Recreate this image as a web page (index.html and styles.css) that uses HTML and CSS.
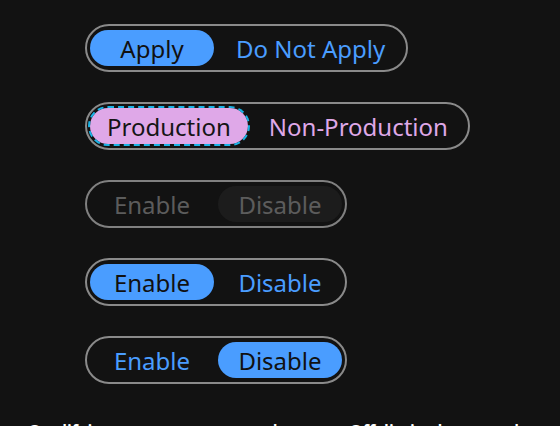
FILE: index.html
```html
<!DOCTYPE html>
<html lang="en">
<head>
<meta charset="utf-8">
<link rel="stylesheet" href="styles.css">
</head>
<body>
<main class="page">
  <div class="stack">
    <div class="toggle">
      <button class="seg seg-on">Apply</button>
      <button class="seg">Do Not Apply</button>
    </div>
    <div class="toggle toggle-purple">
      <button class="seg seg-on seg-focus">Production</button>
      <button class="seg">Non-Production</button>
    </div>
    <div class="toggle toggle-disabled">
      <button class="seg">Enable</button>
      <button class="seg seg-on">Disable</button>
    </div>
    <div class="toggle">
      <button class="seg seg-on">Enable</button>
      <button class="seg">Disable</button>
    </div>
    <div class="toggle">
      <button class="seg">Enable</button>
      <button class="seg seg-on">Disable</button>
    </div>
  </div>
  <p class="note">Qualifying components must be set to Off, limited to one element with label</p>
</main>
</body>
</html>
```

FILE: styles.css
```css
html, body {
  margin: 0;
  padding: 0;
  background: #121212;
  height: 100%;
  overflow: hidden;
}

.page {
  padding: 24px 0 0 0;
  font-family: "Noto Sans", "Open Sans", sans-serif;
}

.stack {
  display: flex;
  flex-direction: column;
  align-items: flex-start;
  gap: 30px;
  padding-left: 85px;
}

.toggle {
  display: inline-flex;
  align-items: center;
  gap: 4px;
  height: 48px;
  box-sizing: border-box;
  border: 2px solid #8a8a8a;
  border-radius: 24px;
  padding: 0 3px;
}

.seg {
  font-family: inherit;
  font-size: 24px;
  line-height: 37px;
  height: 36px;
  min-width: 124px;
  padding: 0 18px;
  border: 0;
  border-radius: 18px;
  background: transparent;
  color: #4a9dff;
  text-align: center;
  white-space: nowrap;
  cursor: pointer;
}

.seg-on {
  background: #4a9dff;
  color: #111111;
}

.toggle-purple .seg {
  padding: 0 17px;
  color: #dfa8e8;
}

.toggle-purple .seg-on {
  background: #dfa8e8;
  color: #151515;
}

.seg-focus {
  outline: 2px dashed #19b3e6;
  outline-offset: 0;
}

.toggle-disabled {
  border-color: #808080;
}

.toggle-disabled .seg {
  color: #5c5c5c;
}

.toggle-disabled .seg-on {
  background: #1c1c1c;
  color: #5c5c5c;
}

.note {
  margin: 36px 0 0 28px;
  color: #ffffff;
  font-size: 17px;
  font-weight: 600;
  line-height: 24px;
  white-space: nowrap;
  overflow: hidden;
}
```
